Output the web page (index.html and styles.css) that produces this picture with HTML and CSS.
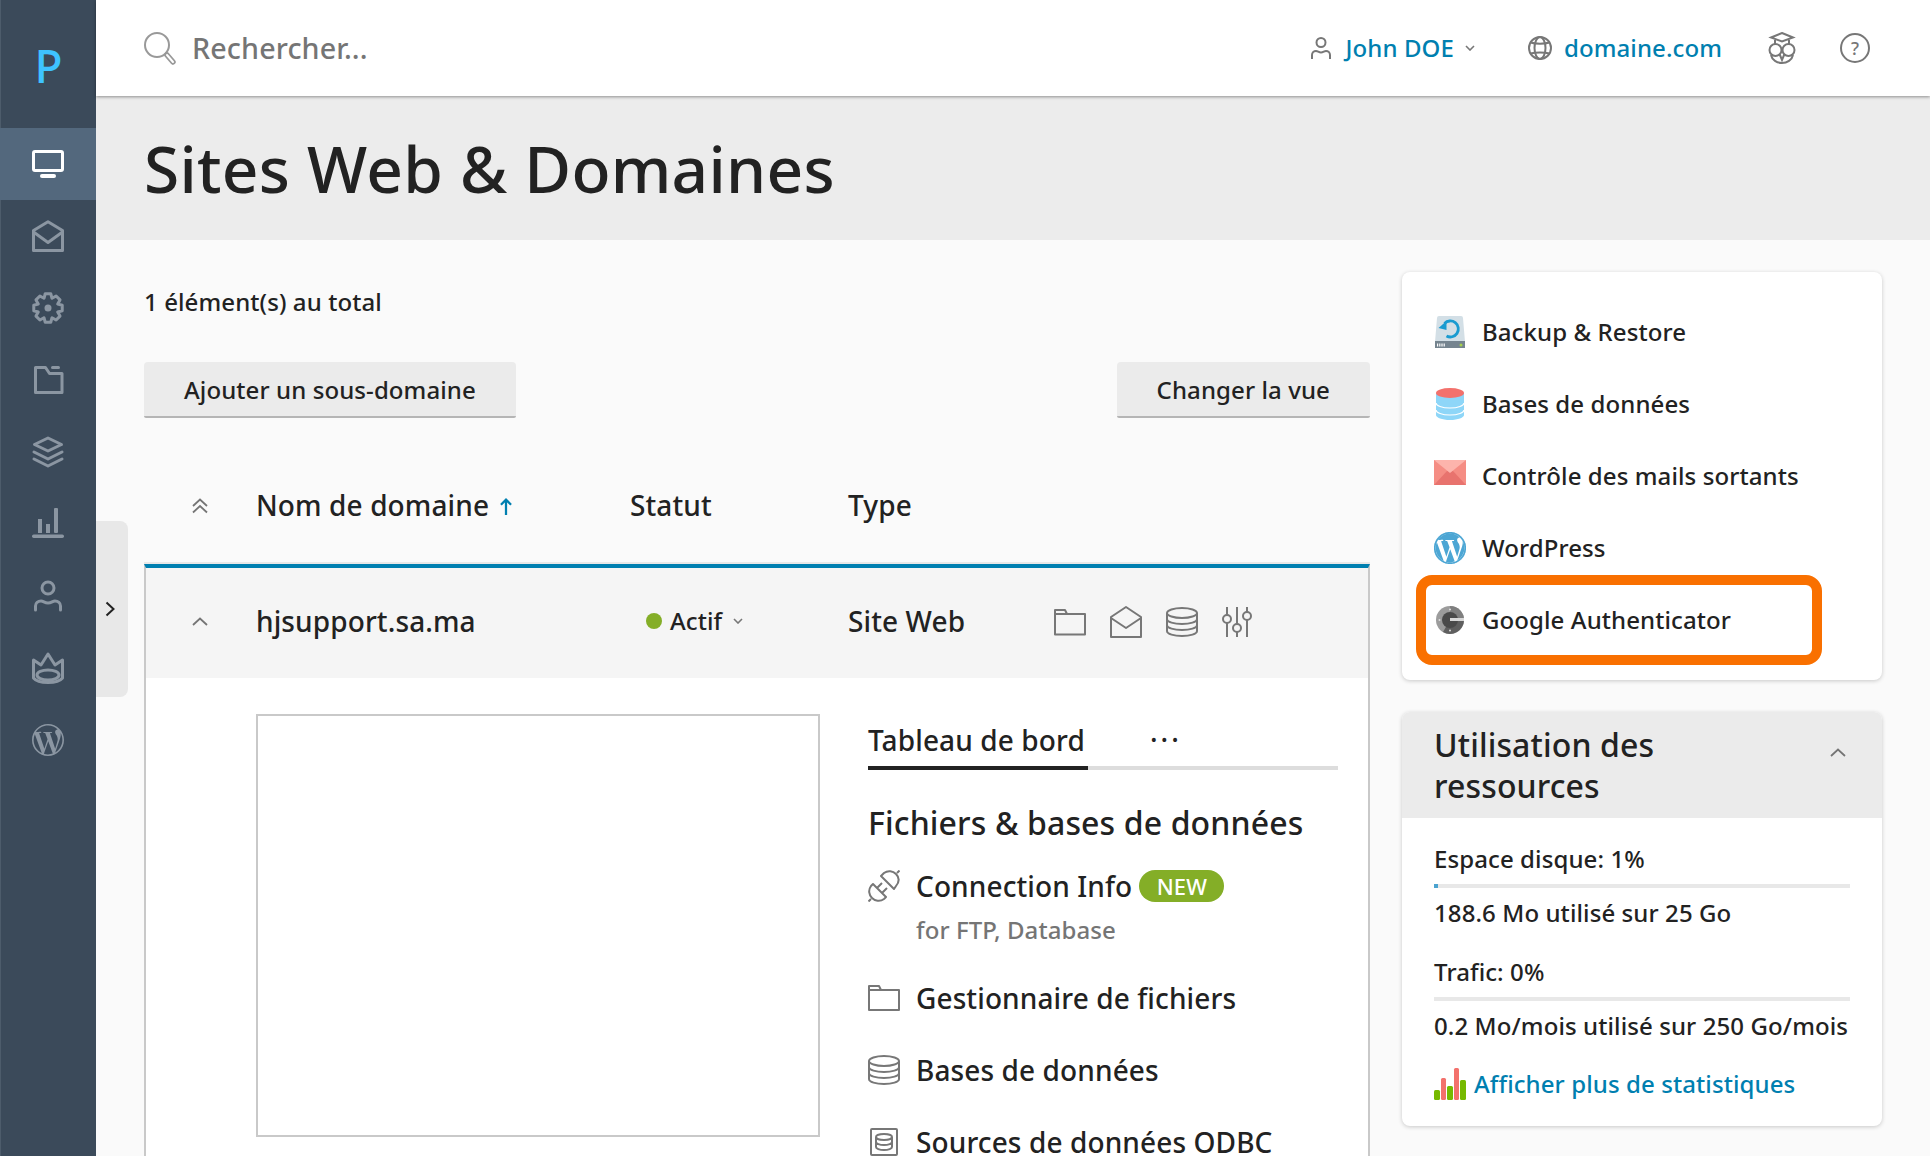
FILE: index.html
```html
<!DOCTYPE html>
<html lang="fr">
<head>
<meta charset="utf-8">
<title>Sites Web &amp; Domaines</title>
<link rel="stylesheet" href="styles.css">
</head>
<body>
<div class="app">
  <nav class="rail">
    <div class="logo">P</div>
    <a class="rail-item active"><svg class="ri" viewBox="0 0 32 32"><rect x="1.5" y="3.5" width="29" height="19" rx="1.5" class="st"/><rect x="8" y="26" width="16" height="4" rx="2" class="fl"/></svg></a>
    <a class="rail-item"><svg class="ri" viewBox="0 0 32 32"><path class="st" d="M1.5 10.5 16 1.8l14.5 8.7v20h-29zM1.5 12 16 22.5 30.5 12"/></svg></a>
    <a class="rail-item"><svg class="ri" viewBox="0 0 32 32"><g transform="translate(16 16)"><path class="st" d="M2.77-14.23 4.02-9.7 8.11-12.02 12.02-8.11 9.7-4.02 14.23-2.77V2.77L9.7 4.02 12.02 8.11 8.11 12.02 4.02 9.7 2.77 14.23H-2.77L-4.02 9.7-8.11 12.02-12.02 8.11-9.7 4.02-14.23 2.77V-2.77L-9.7-4.02-12.02-8.11-8.11-12.02-4.02-9.7-2.77-14.23Z"/><circle r="3.5" class="fl"/></g></svg></a>
    <a class="rail-item"><svg class="ri" viewBox="0 0 32 32"><path class="st" d="M3.500 3.500h10l4 6h12.500v19h-26.500z"/><rect x="19" y="2" width="9" height="3" rx="1.500" class="fl"/></svg></a>
    <a class="rail-item"><svg class="ri" viewBox="0 0 32 32"><path class="st" d="M16 2 29.500 8.500 16 15 2.500 8.500zM2 16l14 7 14-7M2 23l14 7 14-7"/></svg></a>
    <a class="rail-item"><svg class="ri" viewBox="0 0 32 32"><rect y="26.500" width="32" height="3.500" rx="1.700" class="fl"/><rect x="6" y="11" width="4" height="14" class="fl"/><rect x="14" y="16" width="4" height="9" class="fl"/><rect x="22" y="0" width="4" height="25" rx="1" class="fl"/></svg></a>
    <a class="rail-item"><svg class="ri" viewBox="0 0 32 32"><circle cx="16" cy="8" r="6" class="st"/><path class="st" d="M3.500 30v-4c0-3 2.500-5 5.500-5 2.500 0 3.500 2 7 2s4.500-2 7-2c3 0 5.500 2 5.500 5v4"/></svg></a>
    <a class="rail-item"><svg class="ri" viewBox="0 0 32 32"><path class="st" d="M1.500 8 9 13 16 2l7 11 7.500-5v18c-2 2.500-8 4.500-14.500 4.500S3.500 28.500 1.500 26z"/><ellipse cx="16" cy="23" rx="11" ry="5" class="st"/></svg></a>
    <a class="rail-item"><svg class="ri wp" viewBox="0 0 24 24"><path class="fl" d="M21.469 6.825c.84 1.537 1.318 3.3 1.318 5.175 0 3.979-2.156 7.456-5.363 9.325l3.295-9.527c.615-1.54.82-2.771.82-3.864 0-.405-.026-.78-.07-1.11m-7.981.105c.647-.03 1.232-.105 1.232-.105.582-.075.514-.93-.067-.899 0 0-1.755.135-2.88.135-1.064 0-2.85-.15-2.85-.15-.585-.03-.661.855-.075.885 0 0 .54.061 1.125.09l1.68 4.605-2.37 7.08L5.354 6.9c.649-.03 1.234-.1 1.234-.1.585-.075.516-.93-.065-.896 0 0-1.746.138-2.874.138-.2 0-.438-.008-.69-.015C4.911 3.15 8.235 1.215 12 1.215c2.809 0 5.365 1.072 7.286 2.833-.046-.003-.091-.009-.141-.009-1.06 0-1.812.923-1.812 1.914 0 .89.513 1.643 1.06 2.531.411.72.89 1.643.89 2.977 0 .915-.354 1.994-.821 3.479l-1.075 3.585-3.9-11.61.001.014zM12 22.784c-1.059 0-2.081-.153-3.048-.437l3.237-9.406 3.315 9.087c.024.053.05.101.078.149-1.12.393-2.325.609-3.582.609M1.211 12c0-1.564.336-3.05.935-4.39L7.29 21.709C3.694 19.96 1.212 16.271 1.211 12M12 0C5.385 0 0 5.385 0 12s5.385 12 12 12 12-5.385 12-12S18.615 0 12 0"/></svg></a>
  </nav>
  <div class="main">
    <header class="topbar">
      <svg class="search-ic" viewBox="0 0 34 34"><circle cx="14" cy="14" r="12"/><path class="handle" d="M24 24l6 7"/><path class="handle-in" d="M24 24l6 7"/></svg>
      <span class="search-text">Rechercher...</span>
      <div class="top-actions">
        <svg class="ti user-ic" viewBox="0 0 20 24"><circle cx="10" cy="6.500" r="4.500"/><path d="M1 23v-4c0-2.500 2-4 4-4 1.800 0 2.800 1.500 5 1.500s3.200-1.500 5-1.500c2 0 4 1.500 4 4v4"/></svg>
        <a class="top-link name">John DOE</a>
        <svg class="small-chev" viewBox="0 0 10 6"><path d="M1 1l4 4 4-4"/></svg>
        <svg class="ti globe-ic" viewBox="0 0 24 24"><circle cx="12" cy="12" r="11"/><ellipse cx="12" cy="12" rx="5.500" ry="11"/><path d="M2.500 6.500c5 1.500 14 1.500 19 0M2.500 17.500c5-1.500 14-1.500 19 0"/></svg>
        <a class="top-link domain">domaine.com</a>
        <svg class="ti owl-ic" viewBox="0 0 28 32"><path d="M14 1 25 5.500l-11 4-11-4zM7 8v4M21 8v4"/><circle cx="7.500" cy="18" r="6"/><circle cx="20.500" cy="18" r="6"/><path d="M3 23c1 5 6 8 11 8s10-3 11-8M11.500 22l2.500 6 2.500-6"/></svg>
        <span class="help"><span class="help-q">?</span></span>
      </div>
    </header>
    <section class="band"><h1 class="page-title">Sites Web &amp; Domaines</h1></section>
    <div class="content">
      <div class="left">
        <p class="summary">1 élément(s) au total</p>
        <div class="toolbar">
          <button class="btn">Ajouter un sous-domaine</button>
          <button class="btn">Changer la vue</button>
        </div>
        <div class="thead">
          <svg class="chev-ic" viewBox="0 0 16 16"><path d="M1 8l7-6.500L15 8M1 14.500 8 8l7 6.500"/></svg>
          <div class="col-name">Nom de domaine <svg class="sort-ic" viewBox="0 0 12 16"><path d="M6 15V2M1.500 6 6 1.500 10.500 6"/></svg></div>
          <div class="col-status">Statut</div>
          <div class="col-type">Type</div>
        </div>
        <div class="rowbox">
          <div class="row-head">
            <svg class="chev-ic single" viewBox="0 0 16 9"><path d="M1 8l7-6.500L15 8"/></svg>
            <div class="col-name">hjsupport.sa.ma</div>
            <div class="col-status status-val"><i class="dot"></i>Actif<svg class="small-chev" viewBox="0 0 10 6"><path d="M1 1l4 4 4-4"/></svg></div>
            <div class="col-type">Site Web</div>
            <div class="row-icons">
              <svg class="ln" width="32" height="28" viewBox="0 0 32 28"><path d="M1 26.500V2h10l2 4h18v20.500z"/><path d="M1 6h12"/></svg>
              <svg class="ln" width="32" height="32" viewBox="0 0 32 32"><path d="M1 11 16 1l15 10v20H1zM1 12l15 10 15-10"/></svg>
              <svg class="ln" width="32" height="30" viewBox="0 0 32 30"><ellipse cx="16" cy="6" rx="15" ry="5"/><path d="M1 6v18c0 3 7 5 15 5s15-2 15-5V6M1 12c0 3 7 5 15 5s15-2 15-5M1 18c0 3 7 5 15 5s15-2 15-5"/></svg>
              <svg class="ln" width="30" height="32" viewBox="0 0 30 32"><path d="M5 1v8M5 17v14M15 1v17M15 26v5M25 1v5M25 14v17"/><circle cx="5" cy="13" r="4"/><circle cx="15" cy="22" r="4"/><circle cx="25" cy="10" r="4"/></svg>
            </div>
          </div>
          <div class="row-body">
            <div class="thumb"></div>
            <div class="detail">
              <div class="tabs">
                <span class="tab-active">Tableau de bord</span>
                <span class="tab-more">···</span>
              </div>
              <h2 class="section-title">Fichiers &amp; bases de données</h2>
              <div class="tool first">
                <svg class="ln tool-ic" width="32" height="32" viewBox="0 0 32 32"><path d="M13 6 26 19l2-3c4-5 3-9 0-12S20 0 16 3zM29 3l2.500-2.500M5 14 18 27l-2 2c-4 3-9 2-12-1S0 20 3 16zM3 29 .5 31.500M9 18l5-5M14 23l5-5"/></svg>
                <span class="tool-name">Connection Info</span><span class="badge">NEW</span>
              </div>
              <div class="tool-sub">for FTP, Database</div>
              <div class="tool">
                <svg class="ln tool-ic" width="32" height="26" viewBox="0 0 32 26"><path d="M1 25V1h10l2 4h18v20z"/><path d="M1 5h12"/></svg>
                <span class="tool-name">Gestionnaire de fichiers</span>
              </div>
              <div class="tool">
                <svg class="ln tool-ic" width="32" height="30" viewBox="0 0 32 30"><ellipse cx="16" cy="6" rx="15" ry="5"/><path d="M1 6v18c0 3 7 5 15 5s15-2 15-5V6M1 12c0 3 7 5 15 5s15-2 15-5M1 18c0 3 7 5 15 5s15-2 15-5"/></svg>
                <span class="tool-name">Bases de données</span>
              </div>
              <div class="tool">
                <svg class="ln tool-ic" width="32" height="28" viewBox="0 0 32 28"><rect x="3" y="1" width="26" height="26" rx="1"/><ellipse cx="16" cy="9" rx="8" ry="3"/><path d="M8 9v10c0 1.500 3.500 3 8 3s8-1.500 8-3V9M8 14c0 1.500 3.500 3 8 3s8-1.500 8-3"/></svg>
                <span class="tool-name">Sources de données ODBC</span>
              </div>
            </div>
          </div>
        </div>
      </div>
      <aside class="right">
        <div class="card links">
          <a class="link-row"><svg class="link-ic" viewBox="0 0 32 32"><path fill="#d3dfe6" d="M5 0h22a2 2 0 0 1 2 2l2 24H1L3 2a2 2 0 0 1 2-2z"/><path fill="#75848f" d="M1 25h30v7H1z"/><path d="M10.500 7.500a8 8 0 1 1 2 12.500" fill="none" stroke="#1a9bd0" stroke-width="2.800"/><path fill="#1a9bd0" d="M4.500 12l8-7v9z"/><path fill="#fff" d="M3 27.500h1.200v3H3zM5.200 27.500h1.200v3H5.200zM7.400 27.500h1.200v3H7.400zM9.600 27.500h1.200v3H9.600z"/><circle cx="27" cy="29" r="1.500" fill="#a6d24d"/></svg><span>Backup &amp; Restore</span></a>
          <a class="link-row"><svg class="link-ic" viewBox="0 0 32 32"><path fill="#8ed6f8" d="M2 5h28v22c0 2.500-6 5-14 5S2 29.500 2 27z"/><path d="M2 15c0 2.500 6 5 14 5s14-2.500 14-5M2 22c0 2.500 6 5 14 5s14-2.500 14-5" fill="none" stroke="#fff" stroke-width="1.200"/><ellipse cx="16" cy="5" rx="14" ry="5" fill="#f3716c"/></svg><span>Bases de données</span></a>
          <a class="link-row"><svg class="link-ic mail-col" viewBox="0 0 32 25"><path fill="#f58d84" d="M0 0h32v25H0z"/><path fill="#e8736e" d="M0 25 13 11h6l13 14z"/><path fill="#fdb4ac" d="M0 0h32L16 13z"/></svg><span>Contrôle des mails sortants</span></a>
          <a class="link-row"><svg class="link-ic" viewBox="0 0 24 24"><circle cx="12" cy="12" r="12" fill="#4ca6d4"/><path fill="#fff" d="M21.469 6.825c.84 1.537 1.318 3.3 1.318 5.175 0 3.979-2.156 7.456-5.363 9.325l3.295-9.527c.615-1.54.82-2.771.82-3.864 0-.405-.026-.78-.07-1.11m-7.981.105c.647-.03 1.232-.105 1.232-.105.582-.075.514-.93-.067-.899 0 0-1.755.135-2.88.135-1.064 0-2.85-.15-2.85-.15-.585-.03-.661.855-.075.885 0 0 .54.061 1.125.09l1.68 4.605-2.37 7.08L5.354 6.9c.649-.03 1.234-.1 1.234-.1.585-.075.516-.93-.065-.896 0 0-1.746.138-2.874.138-.2 0-.438-.008-.69-.015C4.911 3.15 8.235 1.215 12 1.215c2.809 0 5.365 1.072 7.286 2.833-.046-.003-.091-.009-.141-.009-1.06 0-1.812.923-1.812 1.914 0 .89.513 1.643 1.06 2.531.411.72.89 1.643.89 2.977 0 .915-.354 1.994-.821 3.479l-1.075 3.585-3.9-11.61.001.014zM12 22.784c-1.059 0-2.081-.153-3.048-.437l3.237-9.406 3.315 9.087c.024.053.05.101.078.149-1.12.393-2.325.609-3.582.609M1.211 12c0-1.564.336-3.05.935-4.39L7.29 21.709C3.694 19.96 1.212 16.271 1.211 12M12 0C5.385 0 0 5.385 0 12s5.385 12 12 12 12-5.385 12-12S18.615 0 12 0"/><circle cx="12" cy="12" r="11.400" fill="none" stroke="#4ca6d4" stroke-width="1.300"/></svg><span>WordPress</span></a>
          <a class="link-row"><svg class="link-ic" viewBox="0 0 32 32"><circle cx="16" cy="16" r="14" fill="#9c9c9c"/><path d="M16 16h14a14 14 0 0 1-21 12z" fill="#5f5f5f"/><path d="M16 2a14 14 0 0 1 14 14H16z" fill="#7f7f7f"/><circle cx="16" cy="16" r="8" fill="#4a4a4a"/><path d="M16 14h14v3H16z" fill="#d8d8d8"/><circle cx="5.500" cy="16" r="1" fill="#ddd"/><circle cx="16" cy="5.500" r="1" fill="#ddd"/><circle cx="16" cy="26.500" r="1" fill="#ddd"/></svg><span>Google Authenticator</span></a>
          <div class="highlight"></div>
        </div>
        <div class="card usage">
          <div class="usage-head">
            <h3 class="usage-title">Utilisation des ressources</h3>
            <svg class="chev-ic usage-chev" viewBox="0 0 16 9"><path d="M1 8l7-6.500L15 8"/></svg>
          </div>
          <div class="usage-body">
            <div>Espace disque: 1%</div>
            <div class="bar"><i class="bar-fill" style="width:1%"></i></div>
            <div class="after-bar">188.6 Mo utilisé sur 25 Go</div>
            <div class="gap-top">Trafic: 0%</div>
            <div class="bar"></div>
            <div class="after-bar">0.2 Mo/mois utilisé sur 250 Go/mois</div>
            <a class="stats-link"><svg class="stats-ic" viewBox="0 0 32 32"><rect y="22" width="6" height="10" rx="1.500" fill="#76b900"/><rect x="7" y="10" width="5" height="22" rx="1.500" fill="#f3716c"/><rect x="13" y="18" width="6" height="14" rx="1.500" fill="#76b900"/><rect x="20" y="0" width="5" height="32" rx="1.500" fill="#f3716c"/><rect x="26" y="12" width="6" height="20" rx="1.500" fill="#76b900"/></svg>Afficher plus de statistiques</a>
          </div>
        </div>
      </aside>
    </div>
  </div>
  <div class="collapse-tab"><svg class="tab-chev" viewBox="0 0 10 16"><path d="M1.500 1.500 8.500 8l-7 6.500"/></svg></div>
</div>
</body>
</html>
```
FILE: styles.css
```css
* { box-sizing: border-box; letter-spacing: .004em; }
html, body { margin: 0; height: 100%; }
body { font-family: "Noto Sans", "Open Sans", sans-serif; font-size: 24px; font-weight: 500; line-height: 36px; color: #222; background: #fafafa; overflow: hidden; }
.app { position: relative; display: flex; width: 1930px; height: 1156px; overflow: hidden; }

.rail { width: 96px; flex: none; background: #3b4a5a; border-left: 1px solid #4d5c6b; display: flex; flex-direction: column; }
.logo { height: 128px; display: flex; align-items: center; justify-content: center; font-size: 46px; font-weight: 500; color: #3ec3ff; padding-top: 2px; }
.rail-item { height: 72px; display: flex; align-items: center; justify-content: center; color: #8b96a2; margin-left: -1px; }
.rail-item.active { background: #53687d; color: #fff; }
.ri { width: 32px; height: 32px; overflow: visible; }
.st { fill: none; stroke: currentColor; stroke-width: 3; stroke-linejoin: round; stroke-linecap: round; }
.fl { fill: currentColor; }

.main { flex: 1; min-width: 0; display: flex; flex-direction: column; }
.topbar { height: 96px; flex: none; background: #fff; display: flex; align-items: center; padding: 0 60px 0 47px; box-shadow: 0 1px 3px rgba(0,0,0,.4); position: relative; z-index: 1; }
.search-ic { width: 34px; height: 34px; fill: none; stroke: #999; stroke-width: 2; flex: none; }
.handle { stroke-width: 5.500; stroke-linecap: round; }
.handle-in { stroke: #fff; stroke-width: 2; stroke-linecap: round; }
.search-text { margin-left: 15px; font-size: 28.700px; color: #757575; }
.top-actions { margin-left: auto; display: flex; align-items: center; }
.top-link { color: #007fb0; font-size: 24px; }
.ti { fill: none; stroke: #777; stroke-width: 2; flex: none; }
.user-ic { width: 20px; height: 24px; margin-right: 14px; }
.small-chev { width: 10px; height: 6px; fill: none; stroke: #777; stroke-width: 1.600; margin-left: 11px; flex: none; }
.globe-ic { width: 24px; height: 24px; margin-left: 53px; margin-right: 12px; }
.owl-ic { width: 30px; height: 32px; margin-left: 45px; }
.help { width: 30px; height: 30px; border: 2px solid #777; border-radius: 50%; margin-left: 43px; display: flex; align-items: center; justify-content: center; flex: none; }
.help-q { font-size: 18px; line-height: 1; color: #777; }

.band { height: 144px; flex: none; background: #ececec; display: flex; align-items: center; padding: 2px 0 0 48px; }
.page-title { margin: 0; font-size: 64px; font-weight: 500; line-height: 80px; color: #222; }

.content { flex: 1; min-height: 0; display: flex; gap: 32px; padding: 32px 48px 0 48px; }
.left { width: 1226px; flex: none; }
.right { width: 480px; flex: none; display: flex; flex-direction: column; gap: 32px; }

.summary { margin: 12px 0 0; }
.toolbar { display: flex; justify-content: space-between; margin-top: 42px; }
.btn { height: 56px; padding: 2px 40px 0; border: 0; border-bottom: 2px solid #b5b5b5; border-radius: 4px 4px 2px 2px; background: #ebebeb; font: inherit; color: #222; }

.thead { height: 146px; display: flex; align-items: center; font-size: 28px; border-bottom: 2px solid #e8e8e8; padding-top: 30px; padding-left: 48px; }
.chev-ic { width: 16px; height: 16px; fill: none; stroke: #757575; stroke-width: 1.800; flex: none; }
.thead .chev-ic { margin-top: 2px; }
.chev-ic.single { height: 9px; }
.col-name { margin-left: 48px; width: 374px; flex: none; }
.col-status { width: 218px; flex: none; }
.col-type { width: 206px; flex: none; }
.sort-ic { width: 14px; height: 18px; fill: none; stroke: #007fb0; stroke-width: 2; margin-left: 2px; }

.rowbox { border-top: 4px solid #007fb0; border-left: 2px solid #c9c9c9; border-right: 2px solid #c9c9c9; }
.row-head { height: 110px; background: #f5f5f5; display: flex; align-items: center; font-size: 28px; padding-left: 46px; padding-bottom: 4px; }
.status-val { display: flex; align-items: center; font-size: 24px; padding-left: 16px; }
.dot { width: 16px; height: 16px; border-radius: 50%; background: #84ae27; margin-right: 8px; flex: none; }
.row-icons { display: flex; align-items: center; gap: 24px; margin-top: 2px; }
.ln { fill: none; stroke: #777; stroke-width: 2; stroke-linejoin: round; flex: none; }

.row-body { display: flex; background: #fff; padding: 36px 30px 0 110px; gap: 48px; height: 600px; }
.thumb { width: 564px; height: 423px; border: 2px solid #c9c9c9; background: #fff; flex: none; }
.detail { width: 470px; flex: none; }
.tabs { display: flex; align-items: flex-start; border-bottom: 4px solid #ddd; height: 56px; font-size: 28px; line-height: 52px; position: relative; }
.tab-active { height: 56px; width: 220px; border-bottom: 4px solid #222; }
.tab-more { margin-left: 62px; letter-spacing: 3px; font-size: 28px; line-height: 50px; }
.section-title { margin: 33px 0 0; font-size: 32px; font-weight: 500; line-height: 40px; }
.tool { display: flex; align-items: center; height: 72px; font-size: 28px; }
.tool.first { height: 44px; margin-top: 21px; }
.tool-ic { width: 32px; margin-right: 16px; }
.badge { margin-left: 7px; height: 32px; width: 85px; border-radius: 16px; background: #84ae27; color: #fff; font-size: 22px; line-height: 32px; text-align: center; font-weight: 500; }
.tool-sub { margin: 4px 0 0 48px; color: #757575; height: 50px; }

.card { background: #fff; border-radius: 8px; box-shadow: 0 1px 4px rgba(0,0,0,.2); }
.links { padding: 24px 32px; position: relative; }
.link-row { display: flex; align-items: center; height: 72px; gap: 16px; }
.link-ic { width: 32px; height: 32px; flex: none; }
.link-ic.mail-col { height: 25px; margin-top: -8px; }
.highlight { position: absolute; left: 14px; top: 303px; width: 406px; height: 90px; border: 10px solid #f97000; border-radius: 16px; }

.usage { overflow: hidden; }
.usage-head { height: 106px; background: #ebebeb; padding: 12px 32px; display: flex; justify-content: space-between; }
.usage-title { margin: 0; font-size: 32px; line-height: 41px; font-weight: 500; width: 300px; }
.usage-chev { height: 9px; margin: 24px 4px 0 0; }
.usage-body { padding: 23px 32px 24px; }
.bar { height: 4px; width: 416px; background: #e8e8e8; margin-top: 7px; }
.bar-fill { display: block; height: 4px; background: #4ba3cf; }
.after-bar { margin-top: 7px; white-space: nowrap; }
.gap-top { margin-top: 23px; }
.stats-link { display: flex; align-items: center; gap: 8px; margin-top: 22px; color: #007fb0; }
.stats-ic { width: 32px; height: 32px; flex: none; }

.collapse-tab { position: absolute; left: 96px; top: 521px; width: 32px; height: 176px; background: #e8e8e8; border-radius: 0 8px 8px 0; display: flex; align-items: center; justify-content: center; padding-right: 4px; }
.tab-chev { width: 10px; height: 16px; fill: none; stroke: #222; stroke-width: 2; }
```
